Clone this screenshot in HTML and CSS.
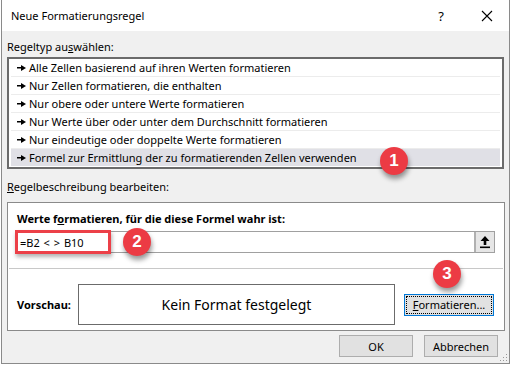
FILE: index.html
```html
<!DOCTYPE html>
<html lang="de">
<head>
  <meta charset="UTF-8">
  <title>Neue Formatierungsregel</title>
  <link rel="stylesheet" href="styles.css">
</head>
<body>

<div class="dialog">
  <div class="titlebar">
    <span class="title">Neue Formatierungsregel</span>
    <span class="help">?</span>
    <svg class="close" width="12" height="12" viewBox="0 0 12 12">
      <path d="M1 1 L11 11 M11 1 L1 11" stroke="#000" stroke-width="1.1" fill="none"/>
    </svg>
  </div>

  <div class="content">
    <div class="label">Regeltyp au<u>s</u>wählen:</div>
    <div class="list">
      <div class="item"><span class="arrow"></span>Alle Zellen basierend auf ihren Werten formatieren</div>
      <div class="item"><span class="arrow"></span>Nur Zellen formatieren, die enthalten</div>
      <div class="item"><span class="arrow"></span>Nur obere oder untere Werte formatieren</div>
      <div class="item"><span class="arrow"></span>Nur Werte über oder unter dem Durchschnitt formatieren</div>
      <div class="item"><span class="arrow"></span>Nur eindeutige oder doppelte Werte formatieren</div>
      <div class="item selected"><span class="arrow"></span>Formel zur Ermittlung der zu formatierenden Zellen verwenden
        <span class="badge badge1">1</span>
      </div>
    </div>

    <div class="label label2"><u>R</u>egelbeschreibung bearbeiten:</div>
    <div class="panel">
      <div class="panel-top">
        <div class="bold">Werte f<u>o</u>rmatieren, für die diese Formel wahr ist:</div>
        <div class="formula">
          <span class="formula-text">=B2 &lt; &gt; B10</span>
          <span class="upbtn">
            <svg width="12" height="14" viewBox="0 0 12 14">
              <path d="M6 1 L10.5 6 L7.3 6 L7.3 10 L4.7 10 L4.7 6 L1.5 6 Z" fill="#000"/>
              <rect x="1" y="11.5" width="10" height="1.6" fill="#000"/>
            </svg>
          </span>
          <span class="highlight"></span>
          <span class="badge badge2">2</span>
        </div>
      </div>
      <div class="panel-bottom">
        <span class="bold">Vorschau:</span>
        <div class="preview">Kein Format festgelegt</div>
        <button class="btn focus"><u>F</u>ormatieren...</button>
        <span class="badge badge3">3</span>
      </div>
    </div>

    <div class="buttons">
      <button class="btn ok">OK</button>
      <button class="btn cancel">Abbrechen</button>
    </div>
  </div>
  <svg class="grip" width="8" height="8" viewBox="0 0 8 8">
    <rect x="6" y="0" width="1" height="1" fill="#999"/>
    <rect x="3" y="3" width="1" height="1" fill="#999"/>
    <rect x="6" y="3" width="1" height="1" fill="#999"/>
    <rect x="0" y="6" width="1" height="1" fill="#999"/>
    <rect x="3" y="6" width="1" height="1" fill="#999"/>
    <rect x="6" y="6" width="1" height="1" fill="#999"/>
  </svg>
</div>

</body>
</html>
```

FILE: styles.css
```css
body {
  margin: 0;
  background: #ffffff;
  font-family: "Noto Sans", "Open Sans", sans-serif;
  font-size: 11px;
  color: #000;
}
.dialog {
  position: relative;
  width: 509px;
  height: 364px;
  margin-left: 1px;
  background: #f0f0f0;
  border: 1px solid #8a8a8a;
  border-top: none;
  box-sizing: border-box;
}
.titlebar {
  height: 31px;
  background: #fff;
  display: flex;
  align-items: center;
  padding-left: 9px;
}
.title {
  font-size: 11px;
  flex: 1;
}
.help {
  font-size: 13px;
  margin-right: 37px;
}
.close {
  margin-right: 16px;
}
.content {
  padding: 0 5px 0 5px;
}
.label {
  height: 26px;
  line-height: 31px;
}
.label2 {
  height: 33px;
  line-height: 35px;
}
.list {
  position: relative;
  height: 112px;
  background: #fff;
  border: 2px solid #6b6b6b;
  box-sizing: border-box;
  padding: 0 2px;
}
.item {
  position: relative;
  height: 18px;
  line-height: 17px;
  border-bottom: 1px solid #ececec;
  box-sizing: border-box;
  padding-left: 6px;
  display: flex;
  align-items: center;
  white-space: nowrap;
}
.item.selected {
  background: #e0e0e6;
  border-bottom: none;
  height: 17px;
}
.arrow {
  display: inline-block;
  width: 9px;
  height: 5px;
  margin-right: 3px;
  background:
    linear-gradient(#000, #000) left center / 6px 1.5px no-repeat;
  position: relative;
}
.arrow::after {
  content: "";
  position: absolute;
  right: 0;
  top: -0.5px;
  border-left: 5px solid #000;
  border-top: 3px solid transparent;
  border-bottom: 3px solid transparent;
}
.badge {
  position: absolute;
  width: 28px;
  height: 28px;
  border-radius: 50%;
  background: #ec3b44;
  color: #fff;
  font-family: "Liberation Sans", Arial, sans-serif;
  font-weight: bold;
  font-size: 17px;
  line-height: 28px;
  text-align: center;
  box-shadow: 1px 4px 5px rgba(0, 0, 0, 0.4);
  z-index: 2;
}
.badge1 {
  left: 369px;
  top: -2px;
}
.panel {
  background: #fff;
  border: 1px solid #8a8a8a;
  width: 498px;
  box-sizing: border-box;
  height: 129px;
}
.panel-top {
  padding: 7px 9px 0 8px;
  height: 66px;
  box-sizing: border-box;
  border-bottom: 1px solid #c8c8c8;
  margin: 0 1px;
}
.bold {
  font-weight: bold;
  font-size: 11px;
  height: 21px;
  line-height: 17px;
}
.formula {
  position: relative;
  height: 22px;
  border: 1px solid #a0a0a0;
  box-sizing: border-box;
  display: flex;
  align-items: center;
  margin-left: 0;
  width: 478px;
}
.formula-text {
  flex: 1;
  padding-left: 2px;
  font-family: "Noto Sans", sans-serif;
  font-size: 11px;
  word-spacing: 1px;
}
.upbtn {
  width: 20px;
  height: 20px;
  background: #e6e6e6;
  border-left: 2px solid #b0b0b0;
  box-sizing: border-box;
  display: flex;
  align-items: center;
  justify-content: center;
}
.highlight {
  position: absolute;
  left: -3px;
  top: -2px;
  width: 96px;
  height: 24px;
  border: 3px solid #ec4048;
  box-sizing: border-box;
  box-shadow: 1px 3px 4px rgba(0, 0, 0, 0.3);
}
.badge2 {
  left: 105px;
  top: -4px;
}
.panel-bottom {
  position: relative;
  display: flex;
  align-items: center;
  padding: 15px 0 0 9px;
}
.panel-bottom .bold {
  width: 61px;
  height: auto;
}
.preview {
  width: 317px;
  height: 41px;
  border: 1px solid #6b6b6b;
  box-sizing: border-box;
  display: flex;
  align-items: center;
  justify-content: center;
  font-size: 14px;
}
.btn {
  font-family: "Noto Sans", "Open Sans", sans-serif;
  font-size: 11px;
  background: #e1e1e1;
  border: 1px solid #adadad;
  color: #000;
  padding: 0;
  height: 22px;
}
.btn.focus {
  margin-left: 9px;
  width: 90px;
  border: 1px solid #0078d7;
  outline: 1px dotted #000;
  outline-offset: -3px;
}
.badge3 {
  left: 425px;
  top: -9px;
}
.buttons {
  display: flex;
  justify-content: flex-end;
  gap: 11px;
  padding: 4px 6px 0 0;
}
.ok, .cancel {
  width: 74px;
}
.grip {
  position: absolute;
  right: 1px;
  bottom: 1px;
}
```
